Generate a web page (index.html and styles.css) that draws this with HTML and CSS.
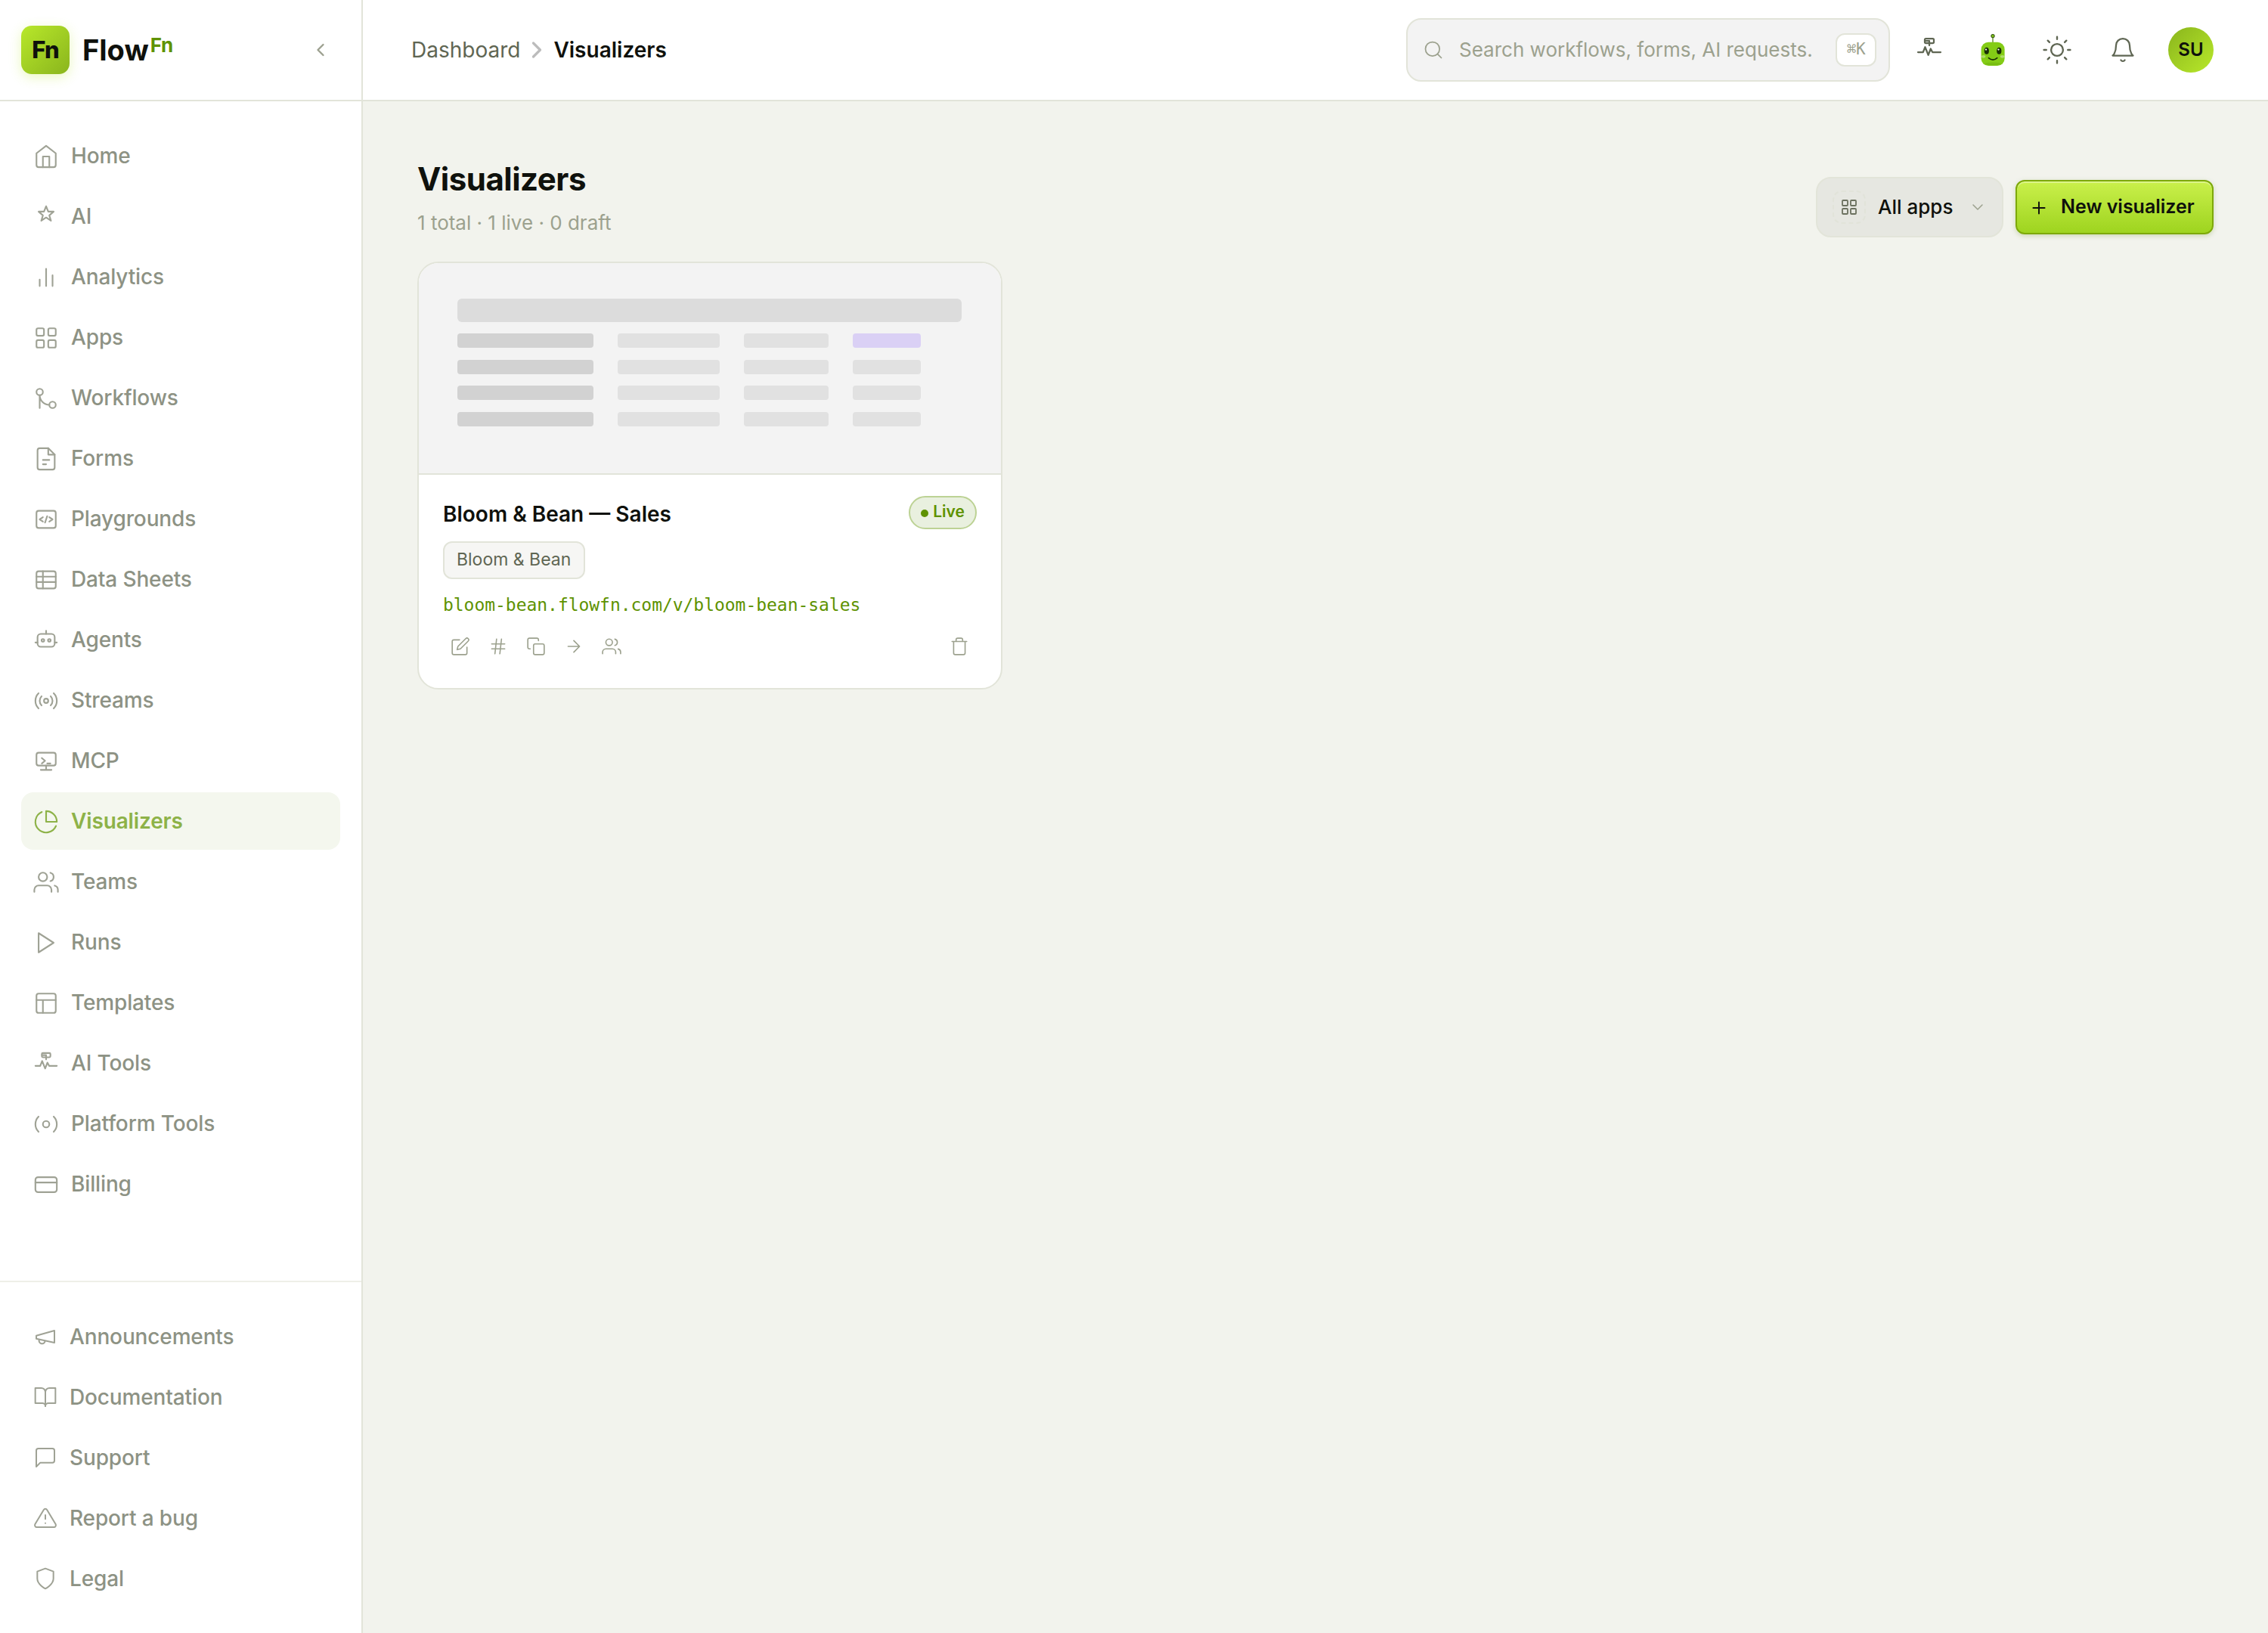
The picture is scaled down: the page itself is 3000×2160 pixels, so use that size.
FILE: index.html
```html
<!DOCTYPE html>
<html lang="en">
<head>
    <meta charset="UTF-8">
    <title>Visualizers - FlowFn</title>
    <link rel="stylesheet" href="styles.css">
</head>
<body>
<div class="app">
    <aside class="sidebar">
        <div class="brand">
            <div class="brand-mark">Fn</div>
            <div class="brand-name">Flow<span class="brand-sup">Fn</span></div>
            <svg class="icon collapse" viewBox="0 0 24 24"><path d="M15 18l-6-6 6-6"/></svg>
        </div>
        <nav class="nav">
            <a class="nav-item"><svg class="icon" viewBox="0 0 24 24"><path d="M3 9l9-7 9 7v11a2 2 0 0 1-2 2H5a2 2 0 0 1-2-2z"/><path d="M9 22V12h6v10"/></svg><span>Home</span></a>
            <a class="nav-item"><svg class="icon" viewBox="0 0 24 24"><path d="M12 2l2 5h5l-4 3.5 1.5 5L12 12.5 7.5 15.5l1.5-5L5 7h5z"/></svg><span>AI</span></a>
            <a class="nav-item"><svg class="icon" viewBox="0 0 24 24"><path d="M18 20V10M12 20V4M6 20v-6"/></svg><span>Analytics</span></a>
            <a class="nav-item"><svg class="icon" viewBox="0 0 24 24"><rect x="3" y="3" width="7" height="7" rx="1.5"/><rect x="14" y="3" width="7" height="7" rx="1.5"/><rect x="3" y="14" width="7" height="7" rx="1.5"/><rect x="14" y="14" width="7" height="7" rx="1.5"/></svg><span>Apps</span></a>
            <a class="nav-item"><svg class="icon" viewBox="0 0 24 24"><circle cx="18" cy="18" r="3"/><circle cx="6" cy="6" r="3"/><path d="M6 21V9a9 9 0 0 0 9 9"/></svg><span>Workflows</span></a>
            <a class="nav-item"><svg class="icon" viewBox="0 0 24 24"><path d="M14 2H6a2 2 0 0 0-2 2v16a2 2 0 0 0 2 2h12a2 2 0 0 0 2-2V8z"/><path d="M14 2v6h6M9 13h6M9 17h3"/></svg><span>Forms</span></a>
            <a class="nav-item"><svg class="icon" viewBox="0 0 24 24"><rect x="3" y="4" width="18" height="16" rx="2"/><path d="M9 10l-3 2 3 2M15 10l3 2-3 2M13 9l-2 6"/></svg><span>Playgrounds</span></a>
            <a class="nav-item"><svg class="icon" viewBox="0 0 24 24"><rect x="3" y="4" width="18" height="16" rx="2"/><path d="M3 9h18M3 14h18M9 4v16"/></svg><span>Data Sheets</span></a>
            <a class="nav-item"><svg class="icon" viewBox="0 0 24 24"><rect x="4" y="6" width="16" height="12" rx="3"/><circle cx="9" cy="12" r="1.25"/><circle cx="15" cy="12" r="1.25"/><path d="M12 3v3M2 14h2M20 14h2"/></svg><span>Agents</span></a>
            <a class="nav-item"><svg class="icon" viewBox="0 0 24 24"><circle cx="12" cy="12" r="2"/><path d="M16.24 7.76a6 6 0 0 1 0 8.49m-8.48-.01a6 6 0 0 1 0-8.49m11.31-2.82a10 10 0 0 1 0 14.14m-14.14 0a10 10 0 0 1 0-14.14"/></svg><span>Streams</span></a>
            <a class="nav-item"><svg class="icon" viewBox="0 0 24 24"><rect x="3" y="4" width="18" height="12" rx="2"/><path d="M7 20h10M12 16v4M8 9l3 2.5L8 14M13 14h3"/></svg><span>MCP</span></a>
            <a class="nav-item active"><svg class="icon" viewBox="0 0 24 24"><path d="M21.21 15.89A10 10 0 1 1 8 2.83"/><path d="M22 12A10 10 0 0 0 12 2v10z"/></svg><span>Visualizers</span></a>
            <a class="nav-item"><svg class="icon" viewBox="0 0 24 24"><path d="M17 21v-2a4 4 0 0 0-4-4H5a4 4 0 0 0-4 4v2"/><circle cx="9" cy="7" r="4"/><path d="M23 21v-2a4 4 0 0 0-3-3.87M16 3.13a4 4 0 0 1 0 7.75"/></svg><span>Teams</span></a>
            <a class="nav-item"><svg class="icon" viewBox="0 0 24 24"><path d="M5 3l14 9-14 9z"/></svg><span>Runs</span></a>
            <a class="nav-item"><svg class="icon" viewBox="0 0 24 24"><rect x="3" y="3" width="18" height="18" rx="2"/><path d="M3 9h18M9 21V9"/></svg><span>Templates</span></a>
            <a class="nav-item"><svg class="icon" viewBox="0 0 24 24"><rect x="8" y="2" width="8" height="4" rx="1"/><path d="M9 4h3v4M2 14h4.5L8.3 9.5l2.8 7L13.2 11l1.6 3H22"/></svg><span>AI Tools</span></a>
            <a class="nav-item"><svg class="icon" viewBox="0 0 24 24"><circle cx="12" cy="12" r="3"/><path d="M19.07 4.93a10 10 0 0 1 0 14.14m-14.14 0a10 10 0 0 1 0-14.14"/></svg><span>Platform Tools</span></a>
            <a class="nav-item"><svg class="icon" viewBox="0 0 24 24"><rect x="2" y="5" width="20" height="14" rx="2.5"/><path d="M2 10h20"/></svg><span>Billing</span></a>
        </nav>
        <nav class="nav nav-bottom">
            <a class="nav-item"><svg class="icon" viewBox="0 0 24 24"><path d="M3 11l18-5v12L3 14v-3z"/><path d="M11.6 16.8a3 3 0 1 1-5.8-1.6"/></svg><span>Announcements</span></a>
            <a class="nav-item"><svg class="icon" viewBox="0 0 24 24"><path d="M2 3h6a4 4 0 0 1 4 4v14a3 3 0 0 0-3-3H2z"/><path d="M22 3h-6a4 4 0 0 0-4 4v14a3 3 0 0 1 3-3h7z"/></svg><span>Documentation</span></a>
            <a class="nav-item"><svg class="icon" viewBox="0 0 24 24"><path d="M21 15a2 2 0 0 1-2 2H7l-4 4V5a2 2 0 0 1 2-2h14a2 2 0 0 1 2 2z"/></svg><span>Support</span></a>
            <a class="nav-item"><svg class="icon" viewBox="0 0 24 24"><path d="M10.29 3.86L1.82 18a2 2 0 0 0 1.71 3h16.94a2 2 0 0 0 1.71-3L13.71 3.86a2 2 0 0 0-3.42 0z"/><path d="M12 9v4M12 17h.01"/></svg><span>Report a bug</span></a>
            <a class="nav-item"><svg class="icon" viewBox="0 0 24 24"><path d="M12 22s8-4 8-10V5l-8-3-8 3v7c0 6 8 10 8 10z"/></svg><span>Legal</span></a>
        </nav>
    </aside>

    <div class="content">
        <header class="topbar">
            <div class="crumbs">
                <span>Dashboard</span>
                <svg class="icon crumb-sep" viewBox="0 0 24 24"><path d="M9 18l6-6-6-6"/></svg>
                <span class="crumb-current">Visualizers</span>
            </div>
            <div class="topbar-right">
                <div class="search">
                    <svg class="icon" viewBox="0 0 24 24"><circle cx="11" cy="11" r="8"/><path d="M21 21l-4.35-4.35"/></svg>
                    <span class="search-text">Search workflows, forms, AI requests.</span>
                    <kbd>⌘K</kbd>
                </div>
                <div class="top-btn"><svg class="icon" viewBox="0 0 24 24"><rect x="8" y="2" width="8" height="4" rx="1"/><path d="M9 4h3v4M2 14h4.5L8.3 9.5l2.8 7L13.2 11l1.6 3H22"/></svg></div>
                <div class="top-btn bot-btn">
                    <svg class="bot" viewBox="0 0 32 44">
                        <path d="M16 4v8" stroke="#4d7c0f" stroke-width="1.2"/>
                        <circle cx="16" cy="3.6" r="2.1" fill="#84cc16" stroke="#365314" stroke-width="1.1"/>
                        <rect x=".6" y="11.8" width="31" height="31.2" rx="9.5" fill="#84cc16"/>
                        <ellipse cx="16" cy="40.4" rx="11" ry="2" fill="#65a30d" opacity=".35"/>
                        <ellipse cx="7.8" cy="23.2" rx="3.1" ry="4.5" fill="#1a2e05"/>
                        <ellipse cx="24.3" cy="23.2" rx="3.1" ry="4.5" fill="#1a2e05"/>
                        <circle cx="7" cy="21.6" r="1.1" fill="#fff"/>
                        <circle cx="23.5" cy="21.6" r="1.1" fill="#fff"/>
                        <ellipse cx="3.6" cy="30.8" rx="2.8" ry="1.9" fill="#fff" opacity=".35"/>
                        <ellipse cx="28.6" cy="30.8" rx="2.8" ry="1.9" fill="#fff" opacity=".35"/>
                        <path d="M10.4 32.6q5.7 5 11.4 0" fill="none" stroke="#1a2e05" stroke-width="1.5" stroke-linecap="round"/>
                    </svg>
                </div>
                <div class="top-btn sun-btn"><svg class="icon" viewBox="0 0 24 24"><circle cx="12" cy="12" r="5"/><path d="M12 1v2M12 21v2M4.22 4.22l1.42 1.42M18.36 18.36l1.42 1.42M1 12h2M21 12h2M4.22 19.78l1.42-1.42M18.36 5.64l1.42-1.42"/></svg></div>
                <div class="top-btn bell-btn"><svg class="icon" viewBox="0 0 24 24"><path d="M18 8A6 6 0 0 0 6 8c0 7-3 9-3 9h18s-3-2-3-9"/><path d="M13.73 21a2 2 0 0 1-3.46 0"/></svg></div>
                <div class="avatar">SU</div>
            </div>
        </header>

        <main class="page">
            <div class="page-head">
                <div>
                    <h1>Visualizers</h1>
                    <p class="summary">1 total · 1 live · 0 draft</p>
                </div>
                <div class="actions">
                    <div class="app-filter">
                        <span class="app-filter-icon"><svg class="icon" viewBox="0 0 24 24"><rect x="3" y="3" width="7" height="7" rx="1"/><rect x="14" y="3" width="7" height="7" rx="1"/><rect x="3" y="14" width="7" height="7" rx="1"/><rect x="14" y="14" width="7" height="7" rx="1"/></svg></span>
                        <span class="app-filter-text">All apps</span>
                        <svg class="icon caret" viewBox="0 0 24 24"><path d="M6 9l6 6 6-6"/></svg>
                    </div>
                    <div class="btn-new">
                        <svg class="icon" viewBox="0 0 24 24"><path d="M12 5v14M5 12h14"/></svg>
                        <span>New visualizer</span>
                    </div>
                </div>
            </div>

            <div class="cards">
                <div class="card">
                    <div class="preview">
                        <div class="bar bar-head"></div>
                        <div class="bar-row"><div class="bar c1"></div><div class="bar c2"></div><div class="bar c3"></div><div class="bar c4 accent"></div></div>
                        <div class="bar-row"><div class="bar c1"></div><div class="bar c2"></div><div class="bar c3"></div><div class="bar c4"></div></div>
                        <div class="bar-row"><div class="bar c1"></div><div class="bar c2"></div><div class="bar c3"></div><div class="bar c4"></div></div>
                        <div class="bar-row"><div class="bar c1"></div><div class="bar c2"></div><div class="bar c3"></div><div class="bar c4"></div></div>
                    </div>
                    <div class="card-body">
                        <div class="card-top">
                            <div class="card-title">Bloom &amp; Bean — Sales</div>
                            <div class="status"><i class="dot"></i>Live</div>
                        </div>
                        <div class="tag">Bloom &amp; Bean</div>
                        <div class="url">bloom-bean.flowfn.com/v/bloom-bean-sales</div>
                        <div class="tools">
                            <span class="tool"><svg class="icon" viewBox="0 0 24 24"><path d="M11 4H4a2 2 0 0 0-2 2v14a2 2 0 0 0 2 2h14a2 2 0 0 0 2-2v-7"/><path d="M18.5 2.5a2.121 2.121 0 0 1 3 3L12 15l-4 1 1-4 9.5-9.5z"/></svg></span>
                            <span class="tool"><svg class="icon" viewBox="0 0 24 24"><path d="M4 9h16M4 15h16M10 3L8 21M16 3l-2 18"/></svg></span>
                            <span class="tool"><svg class="icon" viewBox="0 0 24 24"><rect x="9" y="9" width="13" height="13" rx="2"/><path d="M5 15H4a2 2 0 0 1-2-2V4a2 2 0 0 1 2-2h9a2 2 0 0 1 2 2v1"/></svg></span>
                            <span class="tool"><svg class="icon" viewBox="0 0 24 24"><path d="M5 12h14M12 5l7 7-7 7"/></svg></span>
                            <span class="tool"><svg class="icon" viewBox="0 0 24 24"><path d="M17 21v-2a4 4 0 0 0-4-4H5a4 4 0 0 0-4 4v2"/><circle cx="9" cy="7" r="4"/><path d="M23 21v-2a4 4 0 0 0-3-3.87M16 3.13a4 4 0 0 1 0 7.75"/></svg></span>
                            <span class="tool tool-delete"><svg class="icon" viewBox="0 0 24 24"><path d="M3 6h18M19 6v14a2 2 0 0 1-2 2H7a2 2 0 0 1-2-2V6m3 0V4a2 2 0 0 1 2-2h4a2 2 0 0 1 2 2v2"/></svg></span>
                        </div>
                    </div>
                </div>
            </div>
        </main>
    </div>
</div>
</body>
</html>
```
FILE: styles.css
```css
*{
    padding: 0;
    margin: 0;
    box-sizing: border-box;
}
body{
    font-family: Inter, "Liberation Sans", sans-serif;
    font-size: 28px;
    color: #0f110c;
    background: #f2f3ed;
}
.icon{
    display: block;
    flex: none;
    fill: none;
    stroke: currentColor;
    stroke-width: 1.5;
    stroke-linecap: round;
    stroke-linejoin: round;
}
.app{
    display: flex;
    height: 2160px;
}

/* sidebar */
.sidebar{
    width: 480px;
    flex: none;
    display: flex;
    flex-direction: column;
    background: #fff;
    border-right: 2px solid #e2e4d9;
}
.brand{
    height: 134px;
    flex: none;
    display: flex;
    align-items: center;
    padding: 0 40px 0 28px;
    border-bottom: 2px solid #e2e4d9;
}
.brand-mark{
    width: 64px;
    height: 64px;
    border-radius: 14px;
    background: linear-gradient(135deg, #b8e82a, #8ab51d);
    box-shadow: 0 4px 16px rgba(184, 232, 42, .3);
    font-size: 31px;
    font-weight: 800;
    line-height: 63px;
    letter-spacing: -1px;
    text-align: center;
}
.brand-name{
    display: flex;
    margin-left: 17px;
    font-size: 38px;
    font-weight: 700;
    line-height: 67px;
    letter-spacing: 0;
}
.brand-sup{
    margin-left: 2px;
    color: #5e9200;
    font-size: 26px;
    font-weight: 700;
    line-height: 54px;
    letter-spacing: -.4px;
}
.collapse{
    width: 28px;
    height: 28px;
    margin-left: auto;
    color: #9ca08f;
    stroke-width: 2;
}
.nav{
    flex: 1;
    display: flex;
    flex-direction: column;
    gap: 4px;
    padding: 34px 28px;
}
.nav-bottom{
    flex: none;
    border-top: 2px solid #eeefe8;
}
.nav-item{
    height: 76px;
    display: flex;
    align-items: center;
    gap: 16px;
    padding: 0 16px;
    border-radius: 16px;
    color: #8d9284;
    font-weight: 500;
    letter-spacing: -.14px;
}
.nav-item .icon{
    width: 34px;
    height: 34px;
    margin-top: 2px;
    color: #9fa295;
}
.nav-bottom .nav-item .icon{
    width: 32px;
    height: 32px;
    margin-top: 0;
}
.nav-item.active{
    background: #f4f7ee;
    color: #8db248;
    font-weight: 600;
}
.nav-item.active .icon{
    color: #8db248;
}

/* top bar */
.content{
    flex: 1;
    min-width: 0;
}
.topbar{
    height: 134px;
    display: flex;
    align-items: center;
    justify-content: space-between;
    padding: 0 72px 0 64px;
    background: #fff;
    border-bottom: 2px solid #e2e4d9;
}
.crumbs{
    display: flex;
    align-items: center;
    color: #5f6653;
}
.crumb-sep{
    width: 36px;
    height: 36px;
    margin: 0 4px;
    color: #bcbcbc;
    stroke-width: 2.2;
}
.crumb-current{
    color: #0f110c;
    font-weight: 600;
}
.topbar-right{
    display: flex;
    align-items: center;
}
.search{
    width: 640px;
    height: 84px;
    display: flex;
    align-items: center;
    padding: 0 16px 0 20px;
    margin-right: 16px;
    border: 2px solid #e2e4d9;
    border-radius: 20px;
    background: #f3f3f3;
    color: #9ca18e;
}
.search .icon{
    width: 28px;
    height: 28px;
    margin-right: 20px;
}
.search-text{
    padding-bottom: 2px;
    font-size: 26px;
    white-space: nowrap;
}
kbd{
    width: 54px;
    height: 44px;
    margin-left: auto;
    border: 2px solid #e2e4d9;
    border-radius: 12px;
    background: #fff;
    color: #9ca18e;
    font-family: "DejaVu Sans Mono", monospace;
    font-size: 21px;
    line-height: 38px;
    letter-spacing: -.5px;
    text-align: center;
}
.top-btn{
    padding: 0 18px;
    margin-right: 16px;
    color: #5f6653;
}
.top-btn .icon{
    width: 36px;
    height: 36px;
}
.bot-btn{
    padding: 0 16px;
}
.bot{
    display: block;
    width: 32px;
    height: 44px;
}
.sun-btn .icon{
    width: 38px;
    height: 38px;
}
.bell-btn{
    padding: 0 16px;
    margin-right: 26px;
}
.avatar{
    width: 60px;
    height: 60px;
    border-radius: 50%;
    background: linear-gradient(135deg, #8ab51d, #b8e82a);
    font-size: 24px;
    font-weight: 600;
    line-height: 60px;
    text-align: center;
}

/* page */
.page{
    padding: 72px;
}
.page-head{
    display: flex;
    align-items: flex-end;
    justify-content: space-between;
}
h1{
    font-size: 42px;
    font-weight: 700;
    line-height: 62px;
    letter-spacing: -.5px;
}
.summary{
    margin-top: 8px;
    color: #9ca18e;
    font-size: 26px;
    line-height: 38px;
}
.actions{
    display: flex;
    align-items: center;
    gap: 16px;
}
.app-filter{
    width: 248px;
    height: 80px;
    display: flex;
    align-items: center;
    padding: 0 20px;
    border: 2px solid #e2e4d9;
    border-radius: 20px;
    background: #e6e7e1;
    font-size: 26px;
    font-weight: 500;
}
.app-filter-icon{
    width: 44px;
    height: 44px;
    display: flex;
    align-items: center;
    justify-content: center;
    margin-right: 16px;
    border: 2px dashed #e1e3d9;
    border-radius: 12px;
    color: #6b715f;
}
.app-filter-icon .icon{
    width: 24px;
    height: 24px;
    stroke-width: 1.8;
}
.app-filter-text{
    padding-bottom: 2px;
}
.caret{
    width: 24px;
    height: 24px;
    margin-left: auto;
    color: #9ca18e;
}
.btn-new{
    width: 262px;
    height: 72px;
    display: flex;
    align-items: center;
    gap: 16px;
    padding: 0 16px;
    border: 2px solid #7da90a;
    border-radius: 12px;
    background: linear-gradient(#caf04b, #9ed41f);
    box-shadow: inset 0 2px 0 rgba(255, 255, 255, .35), 0 2px 6px rgba(90, 130, 0, .25);
    font-size: 25px;
    font-weight: 600;
    white-space: nowrap;
}
.btn-new span{
    padding-bottom: 2px;
}
.btn-new .icon{
    width: 26px;
    height: 26px;
    margin-top: 2px;
    stroke-width: 1.8;
}

/* cards */
.cards{
    display: grid;
    grid-template-columns: repeat(3, 774px);
    gap: 28px;
    margin-top: 32px;
}
.card{
    border: 2px solid #e2e4d9;
    border-radius: 28px;
    background: #fff;
    overflow: hidden;
}
.preview{
    height: 280px;
    display: flex;
    flex-direction: column;
    gap: 15.4px;
    padding: 47px 52px 0 50.8px;
    background: #f3f3f3;
    border-bottom: 2px solid #e2e4d9;
}
.bar{
    height: 19.1px;
    border-radius: 4px;
    background: #e1e1e1;
}
.bar-head{
    height: 30.7px;
    border-radius: 6px;
    background: #dcdcdc;
}
.bar-row{
    display: flex;
    gap: 31.7px;
}
.c1{
    width: 180.4px;
    background: #d2d2d2;
}
.c2{
    width: 135.2px;
}
.c3{
    width: 112.7px;
}
.c4{
    width: 90.3px;
}
.accent{
    background: #dad0f5;
}
.card-body{
    padding: 28px 32px 32px;
}
.card-top{
    display: flex;
    justify-content: space-between;
    height: 44px;
}
.card-title{
    font-weight: 600;
    line-height: 49px;
}
.status{
    width: 90px;
    display: flex;
    align-items: center;
    justify-content: center;
    gap: 6px;
    padding-bottom: 3px;
    border: 2px solid #bcd294;
    border-radius: 22px;
    background: #e9f0df;
    color: #5e9200;
    font-size: 21px;
    font-weight: 600;
}
.dot{
    width: 10px;
    height: 10px;
    margin-top: 4px;
    border-radius: 50%;
    background: #5e9200;
}
.tag{
    width: fit-content;
    height: 50px;
    margin-top: 16px;
    padding: 0 17px 0 16px;
    border: 2px solid #e2e4d9;
    border-radius: 12px;
    background: #f6f6f4;
    color: #5f6653;
    font-size: 23px;
    line-height: 45px;
}
.url{
    margin: 17px 0 15px;
    color: #5e9200;
    font-family: "DejaVu Sans Mono", monospace;
    font-size: 23px;
    line-height: 34px;
    letter-spacing: -.04px;
}
.tools{
    display: flex;
    gap: 4px;
    color: #9ca18e;
}
.tool{
    padding: 10px;
}
.tool .icon{
    width: 26px;
    height: 26px;
}
.tool-delete{
    margin-left: auto;
}
```
